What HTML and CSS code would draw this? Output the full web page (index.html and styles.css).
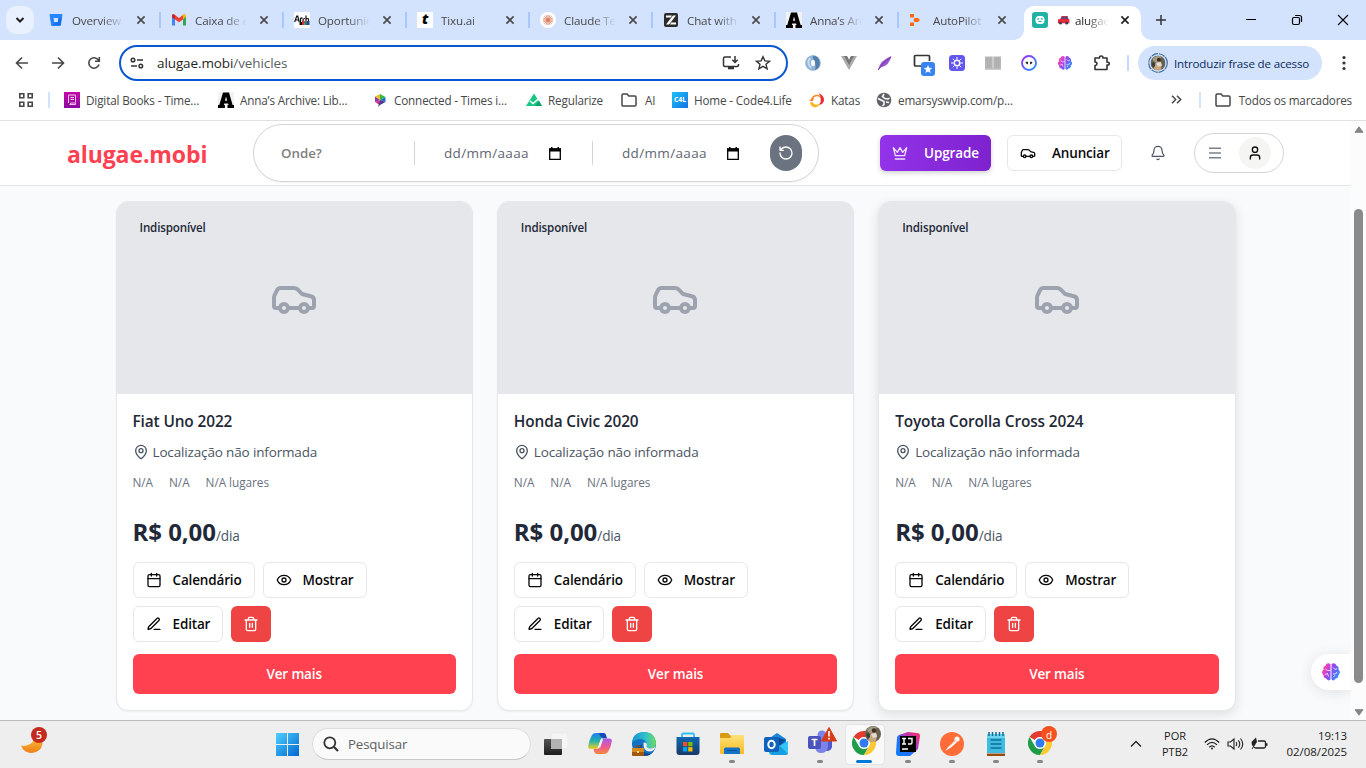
FILE: index.html
```html
<!DOCTYPE html>
<html lang="pt-BR">
<head>
<meta charset="utf-8">
<title>alugae.mobi</title>
<link rel="stylesheet" href="styles.css">
</head>
<body>
<svg class="defs" aria-hidden="true">
  <defs>
    <linearGradient id="gBrain" x1="0" y1="0" x2="1" y2="0.5"><stop offset="0" stop-color="#fb6a4c"/><stop offset=".3" stop-color="#e63fc8"/><stop offset=".6" stop-color="#8a4bf0"/><stop offset="1" stop-color="#3d8bff"/></linearGradient>
    <linearGradient id="gWin" x1="0" y1="0" x2="1" y2="1"><stop offset="0" stop-color="#4fd0ff"/><stop offset="1" stop-color="#0067cf"/></linearGradient>
    <linearGradient id="gMoon" x1="0" y1="0" x2="0" y2="1"><stop offset="0" stop-color="#f8c43c"/><stop offset="1" stop-color="#ef7f1a"/></linearGradient>
    <linearGradient id="gDark" x1="0" y1="0" x2="0" y2="1"><stop offset="0" stop-color="#555"/><stop offset="1" stop-color="#1d1d1d"/></linearGradient>
    <linearGradient id="gCopA" x1="0" y1="0" x2="0" y2="1"><stop offset="0" stop-color="#1a7ff0"/><stop offset=".5" stop-color="#23b3a8"/><stop offset="1" stop-color="#f2d01f"/></linearGradient>
    <linearGradient id="gCopB" x1="0" y1="0" x2="0" y2="1"><stop offset="0" stop-color="#a95bea"/><stop offset=".55" stop-color="#ee5a8f"/><stop offset="1" stop-color="#f98b3c"/></linearGradient>
    <linearGradient id="gEdge" x1="0" y1="0" x2="1" y2="0"><stop offset="0" stop-color="#1595d8"/><stop offset=".6" stop-color="#35c2c4"/><stop offset="1" stop-color="#6fdc5a"/></linearGradient>
    <linearGradient id="gStore" x1="0" y1="0" x2="0" y2="1"><stop offset="0" stop-color="#0f6ab4"/><stop offset="1" stop-color="#173a66"/></linearGradient>
    <linearGradient id="gFold" x1="0" y1="0" x2="0" y2="1"><stop offset="0" stop-color="#ffe07a"/><stop offset="1" stop-color="#f9bd20"/></linearGradient>
    <linearGradient id="gJb" x1="0" y1="1" x2="1" y2="0"><stop offset="0" stop-color="#087cfa"/><stop offset=".45" stop-color="#2e6df5"/><stop offset=".6" stop-color="#b13bc0"/><stop offset="1" stop-color="#fe2d5c"/></linearGradient>
    <linearGradient id="gPurp" x1="0" y1="0" x2="0" y2="1"><stop offset="0" stop-color="#c40aa8"/><stop offset="1" stop-color="#8a0ca0"/></linearGradient>
    <linearGradient id="gRing" x1="0" y1="0" x2="1" y2="1"><stop offset="0" stop-color="#a22bf0"/><stop offset="1" stop-color="#1d9bff"/></linearGradient>
    <symbol id="close" viewBox="0 0 10 10"><path d="M1.400 1.400l7.200 7.200M8.600 1.400l-7.200 7.200" stroke="currentColor" stroke-width="1.600"/></symbol>
    <symbol id="car" viewBox="0 0 24 24"><path d="M19 17h2c.6 0 1-.4 1-1v-3c0-.9-.7-1.700-1.500-1.900C18.700 10.600 16 10 16 10s-1.300-1.400-2.200-2.300c-.5-.4-1.100-.7-1.800-.7H5c-.6 0-1.100.4-1.400.9l-1.400 2.900A3.700 3.700 0 0 0 2 12v4c0 .6.4 1 1 1h2"/><circle cx="7" cy="17" r="2"/><path d="M9 17h6"/><circle cx="17" cy="17" r="2"/></symbol>
    <symbol id="pin" viewBox="0 0 24 24"><path d="M20 10c0 4.990-5.540 10.190-7.400 11.800a1 1 0 0 1-1.200 0C9.540 20.190 4 14.990 4 10a8 8 0 0 1 16 0"/><circle cx="12" cy="10" r="3"/></symbol>
    <symbol id="cal" viewBox="0 0 24 24"><path d="M8 2v4M16 2v4M3 10h18"/><rect x="3" y="4" width="18" height="18" rx="2"/></symbol>
    <symbol id="eye" viewBox="0 0 24 24"><path d="M2.060 12.350a1 1 0 0 1 0-.7 10.750 10.750 0 0 1 19.880 0 1 1 0 0 1 0 .7 10.750 10.750 0 0 1-19.880 0"/><circle cx="12" cy="12" r="3"/></symbol>
    <symbol id="pen" viewBox="0 0 24 24"><path d="M12 20h9M16.380 3.620a1 1 0 0 1 3 3L7.370 18.640a2 2 0 0 1-.86.5l-2.870.84a.5.5 0 0 1-.62-.62l.84-2.870a2 2 0 0 1 .5-.86z"/></symbol>
    <symbol id="trash" viewBox="0 0 24 24"><path d="M3 6h18M19 6v14c0 1-1 2-2 2H7c-1 0-2-1-2-2V6M8 6V4c0-1 1-2 2-2h4c1 0 2 1 2 2v2M10 11v6M14 11v6"/></symbol>
    <symbol id="datepick" viewBox="0 0 12 13"><path d="M.7 2h10.600v10.300H.7z" fill="none" stroke="#000" stroke-width="1.300"/><path d="M0 1.500h12v3H0zM2 0h1.500v2H2zM8.500 0H10v2H8.500z" fill="#000"/></symbol>
    <symbol id="folder" viewBox="0 0 16 14"><path d="M1 2.200c0-.7.4-1.200 1.100-1.200h4l1.700 2h6.100c.7 0 1.100.5 1.100 1.200v7.600c0 .7-.4 1.200-1.100 1.200H2.100C1.400 13 1 12.500 1 11.800z" fill="none" stroke="#474747" stroke-width="1.500"/></symbol>
    <symbol id="annaA" viewBox="0 0 16 16"><path d="M0 0h16v16H0z" fill="#f2f2f2"/><path d="M5 .5h6l3.600 12.500H16V16H9.500v-3h1l-.4-1.600H6.300L5.900 13h1v3H0v-3h1.300zM8 4.500L7 8.700h2.200z" fill="#000"/></symbol>
    <symbol id="brain" viewBox="0 0 20 20"><path d="M9.500 2.200C7.800.4 5 1.400 4.700 3.500 2.600 4 1.800 6 2.700 7.600.6 8.900.6 12 2.600 13c-.4 2.200 1.100 3.500 2.700 3.600.8 2 3.200 2.400 4.200 1zM10.500 2.200c1.700-1.800 4.500-.8 4.800 1.300 2.100.5 2.900 2.500 2 4.100 2.100 1.300 2.100 4.400.1 5.400.4 2.200-1.100 3.500-2.700 3.600-.8 2-3.200 2.400-4.200 1z" fill="url(#gBrain)"/><path d="M4.500 7l2 1.500h3M4 12.500l2.500-1 1 3M12 5.500l2 2 2-1M12 12h2.500l1.500-2M12.500 15l1-1.500" fill="none" stroke="#fff" stroke-width=".8"/></symbol>
    <symbol id="chrome" viewBox="0 0 24 24"><circle cx="12" cy="12" r="12" fill="#fff"/><path d="M1.600 6a12 12 0 0 1 20.800 0H12a6 6 0 0 0-5.200 3z" fill="#e33b2e"/><path d="M1.600 6A12 12 0 0 0 12 24l5.200-9A6 6 0 0 1 6.800 15z" fill="#1e9c4a"/><path d="M22.400 6A12 12 0 0 1 12 24l5.200-9A6 6 0 0 0 12 6z" fill="#fcc934"/><circle cx="12" cy="12" r="5.700" fill="#fff"/><circle cx="12" cy="12" r="4.500" fill="#2f7cf0"/></symbol>
    <symbol id="photo" viewBox="0 0 16 16"><circle cx="8" cy="8" r="8" fill="#69604f"/><path d="M2 3.500A8 8 0 0 1 12 1l-2 4-6 3z" fill="#a39a82"/><path d="M3 14.200l3-7 4-2 2 4-1 6.300a8 8 0 0 1-8-1.300" fill="#c9a67a"/><circle cx="9" cy="4.500" r="2.200" fill="#3c3026"/><path d="M6 8l5-1 1 4-4 1z" fill="#dfdcd6"/><path d="M1 9l3-3 1 5-2 2z" fill="#37403b"/></symbol>
  </defs>
</svg>

<header class="tabstrip">
  <button class="tabsearch"><svg width="10" height="8" viewBox="0 0 10 8"><path d="M1.500 2L5 5.500 8.500 2" fill="none" stroke="#1f1f1f" stroke-width="2"/></svg></button>
  <div class="tabs">
    <div class="tab"><svg width="16" height="16" viewBox="0 0 16 16"><path d="M2 2.500h12L12.300 13.500H3.700z" fill="#2684ff" stroke="#2684ff" stroke-linejoin="round"/><path d="M5.500 6h5L9.800 10H6.200z" fill="#d3e3fd"/><path d="M10.500 6h3l-1 7H4l5.800-3z" fill="#0b5fe0" opacity=".6"/></svg><span class="ttl">Overview</span><svg class="x"><use href="#close"/></svg></div>
    <div class="tab sep"><svg width="16" height="16" viewBox="0 0 16 16"><path d="M1 3.500v10h3V6.500z" fill="#4285f4"/><path d="M15 3.500v10h-3V6.500z" fill="#34a853"/><path d="M1 3.500L3 2.300 8 6l5-3.700 2 1.200-2 3.300L8 10.300 3 6.800z" fill="#ea4335"/><path d="M12 7.200l3-2.400V3c-1-1.200-2-.8-3 0z" fill="#fbbc04"/><path d="M1 3v2l3 2.300V3.200C2.800 2 1.400 2 1 3z" fill="#c5221f"/></svg><span class="ttl">Caixa de e</span><svg class="x"><use href="#close"/></svg></div>
    <div class="tab sep"><svg width="16" height="16" viewBox="0 0 16 16"><rect width="16" height="16" fill="#fff"/><path d="M.7 10l2-6h1l1.500 6M2 8h2.500M6.500 10V6.500q1-1 2 0M11 6.500q-2 0-2 2t2 1.500M12 3.500V10M12 7q2-1 2.500 0v3" fill="none" stroke="#111" stroke-width="1.200"/><path d="M5.500 10h3v3h-3z" fill="#111"/><path d="M8 9h2.500v4H8z" fill="#d9322e"/><path d="M10.500 10H13v3h-2.500z" fill="#16885a"/><path d="M13 9h2.500v4H13z" fill="#2a3f96"/></svg><span class="ttl">Oportunid</span><svg class="x"><use href="#close"/></svg></div>
    <div class="tab sep"><span class="fav-t">t</span><span class="ttl">Tixu.ai</span><svg class="x"><use href="#close"/></svg></div>
    <div class="tab sep"><svg width="16" height="16" viewBox="0 0 16 16"><circle cx="8" cy="8" r="8" fill="#fff"/><path d="M8 2.800v10.400M2.800 8h10.400M4.300 4.300l7.400 7.400M11.700 4.300l-7.400 7.400M6 3.200l4 9.600M10 3.200L6 12.800M3.200 6l9.600 4M3.200 10l9.600-4" stroke="#d97757" stroke-width=".8"/></svg><span class="ttl">Claude Te</span><svg class="x"><use href="#close"/></svg></div>
    <div class="tab sep"><svg width="16" height="16" viewBox="0 0 16 16"><rect x="1" y="1" width="14" height="14" rx="2" fill="#2b2b2b"/><path d="M3 3.500h6l-1.300 2H3zM13 12.500H7l1.300-2H13zM10 3.500h3l-7 9H3z" fill="#fff"/></svg><span class="ttl">Chat with</span><svg class="x"><use href="#close"/></svg></div>
    <div class="tab sep"><svg width="16" height="16"><use href="#annaA"/></svg><span class="ttl">Anna’s Arc</span><svg class="x"><use href="#close"/></svg></div>
    <div class="tab sep"><svg width="16" height="16" viewBox="0 0 16 16"><path d="M1 2h4v3.500H1zM5.500 6H9l2 2-2 2H5.500L4.500 8zM1 10.500h4V14H1z" fill="#ff6a13"/></svg><span class="ttl">AutoPilot</span><svg class="x"><use href="#close"/></svg></div>
    <div class="tab active"><svg width="16" height="16" viewBox="0 0 16 16"><rect width="16" height="16" rx="3" fill="#20b2a4"/><rect x="3.500" y="4" width="9" height="8" rx="3.500" fill="#fff"/><path d="M5.300 6.200h2v1.300h-2zM8.700 6.200h2v1.300h-2zM5.500 9h5q-2.500 2.300-5 0" fill="#20b2a4"/></svg><span class="ttl"><svg width="13" height="10" viewBox="0 0 14 11"><path d="M5 1h6l1.500 3.500H3.500z" fill="#38518c"/><path d="M1 5l3-.8L5.500 1H12v1H6.300L5 4.300h8.500V9H.7z" fill="#e8293c"/><path d="M8.500 2v2.500" stroke="#e8293c"/><circle cx="3.700" cy="9" r="1.500" fill="#333f55"/><circle cx="10.500" cy="9" r="1.500" fill="#333f55"/></svg>alugae</span><svg class="x"><use href="#close"/></svg></div>
  </div>
  <svg class="plus" width="12" height="12" viewBox="0 0 12 12"><path d="M6 1v10M1 6h10" stroke="#333" stroke-width="1.500"/></svg>
  <div class="wincontrols">
    <svg width="12" height="12" viewBox="0 0 12 12"><path d="M1 5.500h10" stroke="#000"/></svg>
    <svg width="12" height="12" viewBox="0 0 12 12"><rect x="1.500" y="3.500" width="7" height="7" rx="1.500" fill="none" stroke="#000" stroke-width="1.200"/><path d="M4 1.500h4.500q2 0 2 2V8" fill="none" stroke="#000" stroke-width="1.200"/></svg>
    <svg width="12" height="12" viewBox="0 0 12 12"><path d="M1 1l10 10M11 1L1 11" stroke="#000" stroke-width="1.100"/></svg>
  </div>
</header>

<div class="toolbar">
  <div class="nav">
    <svg width="14" height="14" viewBox="0 0 14 14"><path d="M13 7H2M7 1.500L1.500 7 7 12.500" /></svg>
    <svg width="14" height="14" viewBox="0 0 14 14"><path d="M1 7h11M7 1.500L12.500 7 7 12.500"/></svg>
    <svg width="14" height="14" viewBox="0 0 14 14"><path d="M12 8.500A5.200 5.200 0 1 1 11.500 4.300M12.300 1v4.200H8"/></svg>
  </div>
  <div class="omnibox">
    <svg width="14" height="12" viewBox="0 0 14 12" fill="none" stroke="#333" stroke-width="1.500"><circle cx="3" cy="3" r="1.800"/><path d="M7 3h6M1 9h6"/><circle cx="10.800" cy="9" r="1.800"/></svg>
    <span class="url">alugae.mobi<em>/vehicles</em></span>
    <svg width="18" height="16" viewBox="0 0 18 16" fill="none" stroke="#333" stroke-width="1.500"><path d="M9 2H3q-1.500 0-1.500 1.500V10q0 1.500 1.500 1.500h12q1.500 0 1.500-1.500V9M13 1v6M10.300 4.800L13 7.500l2.700-2.700"/><path d="M6 12h6v2.300H6z" fill="#333" stroke="none"/></svg>
    <svg class="star" width="16" height="16" viewBox="0 0 16 16" fill="none" stroke="#333" stroke-width="1.400"><path d="M8 1.700l1.900 4.200 4.600.4-3.500 3 1.100 4.500L8 11.400l-4.100 2.400L5 9.300l-3.500-3 4.600-.4z"/></svg>
  </div>
  <div class="exts">
    <svg width="16" height="16" viewBox="0 0 16 16"><circle cx="8" cy="8" r="7.800" fill="#8fb4d6"/><path d="M8 .4A7.600 7.600 0 0 1 10 15Q12 9 8 4z" fill="#527fae"/><path d="M5.500 3Q1 7 6 13" fill="none" stroke="#c5dbef" stroke-width="2"/><ellipse cx="8" cy="8" rx="1.900" ry="3.200" fill="#fff"/></svg>
    <svg width="16" height="16" viewBox="0 0 16 16"><path d="M0 1h6l2 4 2-4h6L8 15z" fill="#aaa"/><path d="M3 1h3l2 4 2-4h3L8 10z" fill="#777"/></svg>
    <svg width="16" height="16" viewBox="0 0 16 16"><path d="M1 15Q3 5 14.500 1 12 11 4.500 12z" fill="#9b59d0"/><path d="M1 15Q6 7 14 2" stroke="#6a35a5" fill="none"/></svg>
    <svg width="22" height="22" viewBox="0 0 22 22"><path d="M8 12H2.500q-1 0-1-1V2.500q0-1 1-1h13q1 0 1 1V7" fill="none" stroke="#333" stroke-width="1.700"/><rect x="8" y="8" width="14" height="14" rx="3" fill="#3984f5"/><path d="M15 11l1.200 2.800 3 .2-2.300 2 .7 3-2.600-1.600L12.400 19l.7-3-2.300-2 3-.2z" fill="#fff"/></svg>
    <svg width="16" height="16" viewBox="0 0 16 16"><rect width="16" height="16" rx="3.500" fill="#6157ee"/><circle cx="8" cy="8" r="2.800" fill="none" stroke="#fff" stroke-width="1.400"/><path d="M8 2v2.500M8 11.500V14M2 8h2.500M11.500 8H14M3.800 3.800l1.700 1.700M10.500 10.500l1.700 1.700M12.200 3.800l-1.700 1.700M5.500 10.500l-1.700 1.700" stroke="#fff"/></svg>
    <svg width="16" height="16" viewBox="0 0 16 16"><path d="M0 1.500h7.700v12H0zM8.300 1.500H16v12H8.300z" fill="#b6b6b6"/><path d="M2.500 3v9M5 3v9M11 3v9M13.500 3v9" stroke="#a6a6a6" stroke-width=".7"/><path d="M0 14h16" stroke="#9b9b9b"/></svg>
    <svg width="16" height="16" viewBox="0 0 16 16"><circle cx="8" cy="8" r="7" fill="#fff" stroke="url(#gRing)" stroke-width="1.900"/><path d="M4.800 7.500l1.700-.5v2zM11.200 7.500L9.500 7v2z" fill="#111" stroke="#111" stroke-width=".8"/></svg>
    <svg width="16" height="16"><use href="#brain"/></svg>
    <svg width="18" height="18" viewBox="0 0 18 18"><path d="M2 4h4.500q-.3-2 1.700-2t1.700 2H14v4.200q2.300-.2 2.300 1.400T14 11v4.500H2v-4q2-.2 2-1.800T2 8z" fill="none" stroke="#333" stroke-width="1.600" stroke-linejoin="round"/></svg>
  </div>
  <i class="tsep"></i>
  <div class="profile"><svg width="20" height="20" viewBox="0 0 20 20"><circle cx="10" cy="10" r="9.300" fill="none" stroke="#3f6ba6" stroke-width="1.200" stroke-dasharray="6.500 .9"/><use href="#photo" x="2.500" y="2.500" width="15" height="15"/></svg><span>Introduzir frase de acesso</span></div>
  <svg class="dots" width="4" height="16" viewBox="0 0 4 16" fill="#333"><circle cx="2" cy="2.500" r="1.600"/><circle cx="2" cy="8" r="1.600"/><circle cx="2" cy="13.500" r="1.600"/></svg>
</div>

<div class="bookmarks">
  <svg class="apps" width="14" height="14" viewBox="0 0 14 14" fill="none" stroke="#474747" stroke-width="1.600"><path d="M.8.800h4v4h-4zM9.200.800h4v4h-4zM.8 9.200h4v4h-4zM9.200 9.200h4v4h-4z"/></svg>
  <i class="bsep"></i>
  <div class="bm b1"><svg width="16" height="16" viewBox="0 0 16 16"><rect width="16" height="16" fill="url(#gPurp)"/><path d="M4.500 3h7v7.500M4.500 3v8M5.500 12.500h6V11h-5v1.500M6.500 5.500H10M6.500 7.500H10" stroke="#ffc4f3" fill="none"/></svg><span>Digital Books - Time...</span></div>
  <div class="bm b2"><svg width="16" height="16"><use href="#annaA"/></svg><span>Anna’s Archive: Lib...</span></div>
  <div class="bm b3"><svg width="16" height="16" viewBox="0 0 16 16"><path d="M8 2L3 4.500 8 8z" fill="#f0c419"/><path d="M8 2l5.500 3L8 8z" fill="#3ab54a"/><path d="M13.500 5v5L8 8z" fill="#1b75bb"/><path d="M3 4.500v5.500L8 8z" fill="#8a3fa6"/><path d="M3 10l4 2.500L8 8z" fill="#d9278a"/><path d="M13.500 10L8 13 6 15l2-7z" fill="#50338f"/></svg><span>Connected - Times i...</span></div>
  <div class="bm b4"><svg width="16" height="16" viewBox="0 0 16 16"><path d="M8 1.500L0 14h16z" fill="#16c784"/><path d="M4 9l3 2.500L13.500 6" fill="none" stroke="#fff" stroke-width="1.600"/><path d="M9 14l4-5 3 5z" fill="#0ba068"/></svg><span>Regularize</span></div>
  <div class="bm b5"><svg width="16" height="14"><use href="#folder"/></svg><span>AI</span></div>
  <div class="bm b6"><b class="c4l">C4L</b><span>Home - Code4.Life</span></div>
  <div class="bm b7"><svg width="16" height="16" viewBox="0 0 16 16" fill="none"><path d="M2.500 8Q4 3 9 3.500q4 1.500 3 6" stroke="#ff8a1f" stroke-width="1.500"/><path d="M9.500 1q6 2.500 5.500 7.500-1 4-5 4.500 4.500-6-.5-12z" fill="#e8283c"/><path d="M10.500 4.500q2 4-.5 7Q7 10 9 7z" fill="#fff"/><path d="M1 10.500Q4 9 5 12q3 2 6-1-1 4-5 4.500-4-.5-5-5z" fill="#ffb51b"/><path d="M0 9l5-4-1 4z" fill="#ff7a2a"/></svg><span>Katas</span></div>
  <div class="bm b8"><svg width="16" height="16" viewBox="0 0 16 16"><circle cx="8" cy="8" r="7.300" fill="#5f6368"/><path d="M2 6.500l4 2 2 1v3l-1.500 1.500M8 2L6.500 4.500 9 6.500l3 .5 1.500-1M10 10l3 .5" stroke="#fff" stroke-width="1.500" fill="none"/></svg><span>emarsyswvip.com/p...</span></div>
  <svg class="more" width="11" height="9" viewBox="0 0 11 9" fill="none" stroke="#474747" stroke-width="1.500"><path d="M1 .8l3.700 3.700L1 8.200M6 .8l3.700 3.700L6 8.200"/></svg>
  <i class="bsep"></i>
  <div class="bm b9"><svg width="16" height="14"><use href="#folder"/></svg><span>Todos os marcadores</span></div>
</div>

<div class="viewport">
  <div class="page">
    <div class="sitehead">
      <div class="logo">alugae.mobi</div>
      <div class="search">
        <span class="where">Onde?</span><i></i>
        <span class="date">dd/mm/aaaa</span><svg class="dp"><use href="#datepick"/></svg><i></i>
        <span class="date">dd/mm/aaaa</span><svg class="dp"><use href="#datepick"/></svg>
        <button class="reset"><svg class="ic" viewBox="0 0 24 24"><path d="M3 12a9 9 0 1 0 9-9 9.750 9.750 0 0 0-6.740 2.740L3 8M3 3v5h5"/></svg></button>
      </div>
      <button class="upgrade"><svg class="ic" viewBox="0 0 24 24"><path d="M2 4l3 12h14l3-12-6 7-4-7-4 7z"/><path d="M5 21h14"/></svg><span>Upgrade</span></button>
      <button class="btn announce"><svg class="ic"><use href="#car"/></svg><span>Anunciar</span></button>
      <svg class="ic bell" viewBox="0 0 24 24"><path d="M10.270 21a2 2 0 0 0 3.460 0M3.260 15.330A1 1 0 0 0 4 17h16a1 1 0 0 0 .74-1.670C19.410 13.960 18 12.500 18 8A6 6 0 0 0 6 8c0 4.500-1.410 5.960-2.740 7.330"/></svg>
      <div class="menu"><svg class="ic bars" viewBox="0 0 24 24"><path d="M3 5h18M3 12h18M3 19h18"/></svg><span class="avatar"><svg class="ic" viewBox="0 0 24 24"><path d="M19 21v-2a4 4 0 0 0-4-4H9a4 4 0 0 0-4 4v2"/><circle cx="12" cy="7" r="4"/></svg></span></div>
    </div>
    <main class="cards">
      <article class="card">
        <div class="photo"><span class="badge">Indisponível</span><svg class="bigcar"><use href="#car"/></svg></div>
        <div class="body">
          <h3>Fiat Uno 2022</h3>
          <p class="loc"><svg class="ic"><use href="#pin"/></svg><span>Localização não informada</span></p>
          <p class="specs"><span>N/A</span><span>N/A</span><span>N/A lugares</span></p>
          <p class="price"><b>R$ 0,00</b><span>/dia</span></p>
          <div class="actions">
            <button class="btn w122"><svg class="ic"><use href="#cal"/></svg><span>Calendário</span></button>
            <button class="btn w104"><svg class="ic"><use href="#eye"/></svg><span>Mostrar</span></button>
            <button class="btn w90"><svg class="ic"><use href="#pen"/></svg><span>Editar</span></button>
            <button class="del"><svg class="ic"><use href="#trash"/></svg></button>
          </div>
          <button class="cta">Ver mais</button>
        </div>
      </article>
      <article class="card">
        <div class="photo"><span class="badge">Indisponível</span><svg class="bigcar"><use href="#car"/></svg></div>
        <div class="body">
          <h3>Honda Civic 2020</h3>
          <p class="loc"><svg class="ic"><use href="#pin"/></svg><span>Localização não informada</span></p>
          <p class="specs"><span>N/A</span><span>N/A</span><span>N/A lugares</span></p>
          <p class="price"><b>R$ 0,00</b><span>/dia</span></p>
          <div class="actions">
            <button class="btn w122"><svg class="ic"><use href="#cal"/></svg><span>Calendário</span></button>
            <button class="btn w104"><svg class="ic"><use href="#eye"/></svg><span>Mostrar</span></button>
            <button class="btn w90"><svg class="ic"><use href="#pen"/></svg><span>Editar</span></button>
            <button class="del"><svg class="ic"><use href="#trash"/></svg></button>
          </div>
          <button class="cta">Ver mais</button>
        </div>
      </article>
      <article class="card raised">
        <div class="photo"><span class="badge">Indisponível</span><svg class="bigcar"><use href="#car"/></svg></div>
        <div class="body">
          <h3>Toyota Corolla Cross 2024</h3>
          <p class="loc"><svg class="ic"><use href="#pin"/></svg><span>Localização não informada</span></p>
          <p class="specs"><span>N/A</span><span>N/A</span><span>N/A lugares</span></p>
          <p class="price"><b>R$ 0,00</b><span>/dia</span></p>
          <div class="actions">
            <button class="btn w122"><svg class="ic"><use href="#cal"/></svg><span>Calendário</span></button>
            <button class="btn w104"><svg class="ic"><use href="#eye"/></svg><span>Mostrar</span></button>
            <button class="btn w90"><svg class="ic"><use href="#pen"/></svg><span>Editar</span></button>
            <button class="del"><svg class="ic"><use href="#trash"/></svg></button>
          </div>
          <button class="cta">Ver mais</button>
        </div>
      </article>
    </main>
    <div class="assistant"><svg width="20" height="20"><use href="#brain"/></svg></div>
  </div>
  <div class="scrollbar">
    <svg width="10" height="7" viewBox="0 0 10 7"><path d="M5 .8L9 6.300H1z" fill="#868686" stroke="#868686" stroke-linejoin="round"/></svg>
    <i></i>
    <svg width="10" height="7" viewBox="0 0 10 7"><path d="M5 6.200L9 .7H1z" fill="#868686" stroke="#868686" stroke-linejoin="round"/></svg>
  </div>
</div>

<footer class="taskbar">
  <div class="weather"><svg width="24" height="20" viewBox="0 0 24 20"><path d="M1 11.500C8 13 14 9 15.500 2q7.500 2 7 8-1.500 8-10.500 9-8.500 0-11-7.500z" fill="url(#gMoon)"/></svg><b>5</b></div>
  <svg class="win" width="23" height="23" viewBox="0 0 23 23"><path d="M0 0h11v11H0zM12 0h11v11H12zM0 12h11v11H0zM12 12h11v11H12z" fill="url(#gWin)"/></svg>
  <div class="wsearch"><svg width="16" height="16" viewBox="0 0 16 16" fill="none" stroke="#333" stroke-width="1.800"><circle cx="6.800" cy="6.800" r="5.500"/><path d="M11 11l4 4" stroke-width="2.200"/></svg><span>Pesquisar</span></div>
  <div class="apps-row">
    <div class="app"><svg width="24" height="24" viewBox="0 0 24 24"><rect x="7" y="1" width="17" height="16" rx="1" fill="#f5f5f5" stroke="#ddd" stroke-width=".5"/><rect x="0" y="7" width="18" height="16" rx="1" fill="url(#gDark)"/><rect x="7" y="7" width="11" height="10" fill="#b2b2b2"/></svg></div>
    <div class="app"><svg width="24" height="24" viewBox="0 0 24 24"><path d="M8 1h7q2 0 2.700 2l.8 3H15q-2 0-2.600 2L10 15.500Q9.300 17 7 17H3q-3.200 0-2.800-3Q1 8 4 3q1.200-2 4-2z" fill="url(#gCopA)"/><path d="M11 1h4.500q2 0 2.500 2l1 3.500h-4L12 4z" fill="#1b49b5"/><path d="M16 22H9q-2 0-2.700-2L5.500 17H9q2 0 2.600-2L14 8q.5-1.500 3-1.500h4q3.200 0 2.800 3Q23 15 20 20q-1.200 2-4 2z" fill="url(#gCopB)"/><path d="M10.300 14.500L13 7.500h2l-2.700 8h-2.500z" fill="#eee"/></svg></div>
    <div class="app"><svg width="24" height="24" viewBox="0 0 24 24"><circle cx="12" cy="12" r="12" fill="#1073c4"/><path d="M0 11Q1 0 12 0t12 11q0 6-7 5.500-3-.5-2-3Q15 8 9 7 3 7 0 11z" fill="url(#gEdge)"/><path d="M10 12q-2 8 6 9.500 4 0 6-2.500-3.500 5-10 5Q4 23 6 15z" fill="#0c4a91"/><path d="M11.500 10.500q4-.5 3.300 3Q14 16 18 16.500q4 0 5.500-2-1 5-6.500 5-6-.5-5.500-9z" fill="#eee"/><rect x="0" y="16" width="12" height="8" rx="1" fill="#a3560c"/><path d="M0 16h12v4H0z" fill="#d58a21"/><path d="M5 19h2v2H5z" fill="#fcdb6d"/><path d="M4 16v-2h4v2" fill="none" stroke="#8b4a0a"/></svg></div>
    <div class="app"><svg width="24" height="24" viewBox="0 0 24 24"><path d="M6 6V2.500Q6 1.500 7 1.500h10q1 0 1 1V6" fill="none" stroke="#2fc1f5" stroke-width="1.800"/><path d="M.5 5h23v15q0 3-3 3h-17q-3 0-3-3z" fill="url(#gStore)"/><path d="M7 10h4.300v4.300H7z" fill="#f25022"/><path d="M12.200 10h4.300v4.300h-4.300z" fill="#7fba00"/><path d="M7 15.200h4.300v4.300H7z" fill="#00a4ef"/><path d="M12.200 15.200h4.300v4.300h-4.300z" fill="#ffb900"/></svg></div>
    <div class="app run"><svg width="24" height="24" viewBox="0 0 24 24"><path d="M0 2q0-1 1-1h7l3 3h12q1 0 1 1v5H0z" fill="#d89b12"/><path d="M0 6h10l2-3h11q1 0 1 1v18H1q-1 0-1-1z" fill="url(#gFold)"/><path d="M4 22v-5q0-1.500 1.500-1.500h13q1.500 0 1.500 1.500v5z" fill="#1572c4"/><path d="M7 18.500h10" stroke="#0c549c"/></svg></div>
    <div class="app"><svg width="24" height="24" viewBox="0 0 24 24"><path d="M3 8L13 1l9 6v10H3z" fill="#1687d9"/><path d="M12 5l10 3-10 9z" fill="#0b4c97"/><path d="M24 9v11q0 3-3 3H8q-3 0-3-3z" fill="#34c5f2"/><path d="M5 20l10-7 9 9q-1 1-3 1H8z" fill="#179ee0"/><rect y="5" width="15" height="15" rx="2" fill="#0f63bd"/><ellipse cx="7.500" cy="12.500" rx="3.200" ry="3.700" fill="none" stroke="#fff" stroke-width="2"/></svg></div>
    <div class="app run"><svg width="30" height="28" viewBox="0 0 30 28"><circle cx="14" cy="8" r="4.500" fill="#7b83eb"/><path d="M16 11h8v9q-1 4-5 4h-3z" fill="#5059c9"/><path d="M8 11h12v9q-1 6-7 6-5 0-6-6z" fill="#7b83eb"/><rect x="0" y="9" width="13" height="13" rx="2" fill="#4b53bc"/><path d="M3.500 12.500h6M6.500 12.500v6.500" stroke="#fff" stroke-width="1.700"/><path d="M21 .5L28.500 14h-15z" fill="#d83b16" stroke="#d83b16" stroke-linejoin="round"/><path d="M21 4v5.500M21 10.800v1.700" stroke="#fff" stroke-width="1.600"/></svg></div>
    <div class="app current"><svg width="30" height="30" viewBox="0 0 30 30"><use href="#chrome" x="0" y="5" width="24" height="24"/><use href="#photo" x="13" y="0" width="16" height="16"/></svg></div>
    <div class="app run"><svg width="24" height="24" viewBox="0 0 24 24"><path d="M1 6q0-2 2-3l9-3 9 1q3 0 3 3l-2 13-8 7H3q-3 0-3-3z" fill="url(#gJb)"/><rect x="4" y="4" width="16" height="16" fill="#000"/><path d="M6 6.500h4M6 12h4M8 6.500V12M12 6.500h4v4q0 1.500-1.500 1.500H12M6 17h6" stroke="#fff" stroke-width="1.400" fill="none"/></svg></div>
    <div class="app run"><svg width="24" height="24" viewBox="0 0 24 24"><circle cx="12" cy="12" r="12" fill="#ff6c37"/><path d="M5 19l4-5 6-6 2 2-6 5.500z" fill="#fff"/><circle cx="17" cy="7" r="2.600" fill="#fff"/><path d="M9 14.500l7-7" stroke="#ff6c37" stroke-width=".7"/></svg></div>
    <div class="app run"><svg width="24" height="24" viewBox="0 0 24 24"><path d="M3 2h18v19H3z" fill="#3fbde0"/><path d="M3 2h18v4H3z" fill="#6bd4ee"/><path d="M3 21.500h18V24H3z" fill="#9a4b12"/><path d="M5 0v4M8.500 0v4M12 0v4M15.500 0v4M19 0v4" stroke="#126a96" stroke-width="1.500"/><path d="M6.500 8h11M6.500 12h11M6.500 16h11" stroke="#0f6c9a" stroke-width="1.700"/></svg></div>
    <div class="app run"><svg width="30" height="30" viewBox="0 0 30 30"><use href="#chrome" x="0" y="5" width="24" height="24"/><circle cx="21" cy="8" r="8" fill="#f4511e"/></svg><b class="d">d</b></div>
  </div>
  <svg class="chev" width="12" height="8" viewBox="0 0 12 8"><path d="M1 6.500L6 1.500l5 5" fill="none" stroke="#222" stroke-width="1.300"/></svg>
  <div class="lang">POR<br>PTB2</div>
  <div class="tray">
    <svg width="16" height="12" viewBox="0 0 16 12" fill="none" stroke="#222" stroke-width="1.200"><path d="M.8 4.500Q8-2.800 15.200 4.500M3 6.900q5-5 10 0M5.200 9.200q2.800-2.700 5.600 0"/><circle cx="8" cy="10.500" r="1" fill="#222" stroke="none"/></svg>
    <svg width="17" height="14" viewBox="0 0 17 14" fill="none" stroke="#222" stroke-width="1.100"><path d="M1 5v4h2.500L7 12V2L3.500 5zM9 5q1.500 2 0 4M11.300 3.300q3 3.700 0 7.400M13.500 1.500q4.500 5.500 0 11"/></svg>
    <svg width="17" height="14" viewBox="0 0 17 14"><path d="M7 4h6q1.500 0 1.500 1.500v4Q14.500 11 13 11H5Q3.500 11 3 10" fill="none" stroke="#222" stroke-width="1.300"/><path d="M15 6.300h1.500v2.500H15z" fill="#222"/><path d="M.5 5L5 .5l1 4.500-3 4-2-.5z" fill="#222"/><path d="M1 12l3-5" stroke="#222"/></svg>
  </div>
  <div class="clock">19:13<br>02/08/2025</div>
</footer>
</body>
</html>
```
FILE: styles.css
```css
* { box-sizing: border-box; }
body {
  margin: 0; width: 1366px; height: 768px; overflow: hidden;
  display: flex; flex-direction: column;
  font-family: "Open Sans", "Noto Sans", sans-serif;
  background: #fff;
}
svg { display: block; flex: none; }
button { font: inherit; border: 0; margin: 0; padding: 0; display: flex; align-items: center; justify-content: center; flex: none; }
p, h3 { margin: 0; }
span { white-space: nowrap; }
.defs { position: absolute; width: 0; height: 0; }

/* browser tabs */
.tabstrip { height: 40px; flex: none; display: flex; align-items: center; background: #d3e3fd; padding-left: 6px; font-size: 11.600px; letter-spacing: -.15px; color: #474747; }
.tabsearch { width: 28px; height: 28px; border-radius: 10px; background: #e9f0fe; margin-right: 3px; }
.tabs { display: flex; height: 40px; }
.tab { width: 123px; height: 40px; display: flex; align-items: center; padding-left: 11px; position: relative; }
.tab.sep::before { content: ""; width: 2px; height: 16px; background: #a8c7fa; position: absolute; left: -1px; top: 12px; }
.ttl { width: 54px; margin-left: 8px; -webkit-mask-image: linear-gradient(90deg, #000 55%, transparent 96%); mask-image: linear-gradient(90deg, #000 55%, transparent 96%); }
.x { width: 10px; height: 10px; margin-left: 10px; color: #474747; }
.fav-t { width: 16px; height: 16px; background: #fff; color: #000; font-size: 14px; font-weight: 800; font-style: italic; line-height: 14px; text-align: center; flex: none; }
.tab.active { z-index: 1; color: #1f1f1f; }
.tab.active > * { position: relative; }
.tab.active .x { color: #1f1f1f; margin-left: 9px; }
.tab.active::before { content: ""; position: absolute; left: 3px; top: 6px; width: 117px; height: 34px; background: #fff; border-radius: 10px 10px 0 0; }
.tab.active::after { content: ""; position: absolute; left: -7px; bottom: 0; width: 137px; height: 10px; background: radial-gradient(circle at 0 0, transparent 9.500px, #fff 10px) left / 10px 10px no-repeat, radial-gradient(circle at 100% 0, transparent 9.500px, #fff 10px) right / 10px 10px no-repeat; }
.tab.active .ttl { display: flex; align-items: center; gap: 5px; margin-left: 9px; }
.plus { margin-left: 11px; }
.wincontrols { display: flex; gap: 34px; margin-left: auto; padding-right: 17px; }

/* address bar */
.toolbar { height: 43px; flex: none; display: flex; align-items: center; padding: 3px 20px 0 15px; background: #fff; }
.nav { display: flex; gap: 22px; fill: none; stroke: #474747; stroke-width: 1.600; margin-right: 18px; }
.omnibox { width: 669px; height: 36px; border: 2px solid #0b57d0; border-radius: 18px; display: flex; align-items: center; padding: 0 15px 0 9px; }
.url { font-size: 13.500px; letter-spacing: -.1px; color: #1f1f1f; flex: 1; margin-left: 13px; }
.url em { font-style: normal; color: #5b5f63; }
.star { margin-left: 15px; }
.exts { display: flex; align-items: center; gap: 20px; margin-left: 17px; width: 306px; }
.exts svg:nth-child(4) { margin: 4px -5px 0 0; }
.exts svg:nth-child(5) { margin-left: -1px; }
.tsep { width: 2px; height: 16px; background: #c7dafb; margin: 0 9px 0 16px; flex: none; }
.profile { width: 184px; height: 34px; border-radius: 17px; background: #d3e3fd; display: flex; align-items: center; gap: 6px; padding-left: 10px; font-size: 11.600px; letter-spacing: -.18px; color: #0b2a5c; flex: none; }
.dots { margin-left: 20px; }

/* bookmarks bar */
.bookmarks { height: 38px; flex: none; display: flex; align-items: center; padding: 0 14px 4px 19px; font-size: 11.700px; letter-spacing: -.15px; color: #474747; border-bottom: 1px solid #e0e0e0; }
.bsep { width: 2px; height: 16px; background: #d3e3fd; margin: 0 14px 0 15px; }
.bm { display: flex; align-items: center; gap: 6px; }
.b1 { width: 154px; } .b2 { width: 154px; } .b3 { width: 154px; } .b4 { width: 95px; } .b5 { width: 51px; gap: 8px; } .b6 { width: 137px; } .b7 { width: 67px; } .b8 { width: 295px; }
.b9 { gap: 8px; white-space: nowrap; letter-spacing: -.2px; margin-left: auto; }
.more + .bsep { margin: 0 0 0 17px; }
.c4l { width: 16px; height: 16px; background: linear-gradient(135deg, #1cc3f5, #1272e8); color: #fff; font-size: 7px; line-height: 15px; text-align: center; letter-spacing: -.2px; }

/* site */
.viewport { flex: 1; display: flex; min-height: 0; }
.page { width: 1351px; background: #f9fafb; position: relative; overflow: hidden; }
.ic { width: 16px; height: 16px; fill: none; stroke: currentColor; stroke-width: 2; stroke-linecap: round; stroke-linejoin: round; }
.sitehead { height: 65px; background: #fff; border-bottom: 1px solid #e5e7eb; display: flex; align-items: center; padding-left: 67px; }
.logo { width: 186px; font-size: 23px; letter-spacing: -.1px; font-weight: 700; color: #ff4050; padding-top: 1px; }
.search { width: 566px; height: 58px; border: 1px solid #d1d5db; border-radius: 29px; box-shadow: 0 1px 2px rgba(0,0,0,.06); display: flex; align-items: center; padding-left: 27px; }
.search i { width: 1px; height: 24px; background: #d1d5db; margin-right: 29px; }
.where { width: 133px; font-size: 13.300px; font-weight: 600; color: #808080; }
.date { width: 105px; font-size: 13.500px; color: #5f6673; letter-spacing: .35px; }
.dp { width: 12px; height: 13px; margin-right: 31px; }
.reset { width: 32px; height: 36px; border-radius: 16px; background: #6b7280; color: #fff; }
.upgrade { width: 111px; height: 36px; margin-left: 61px; border-radius: 6px; background: linear-gradient(90deg, #9333ea, #7e22ce); color: #fff; font-size: 13.500px; letter-spacing: -.1px; font-weight: 600; gap: 16px; box-shadow: 0 2px 5px rgba(0,0,0,.18); }
.upgrade .ic { opacity: .85; }
.btn { height: 36px; border: 1px solid #e5e7eb; border-radius: 6px; background: #fff; color: #0a0a0a; font-size: 13.500px; letter-spacing: -.15px; font-weight: 600; gap: 11px; justify-content: flex-start; padding-left: 12px; }
.announce { width: 115px; margin-left: 16px; gap: 16px; }
.bell { color: #4b5563; margin-left: 28px; stroke-width: 1.800; }
.menu { margin-left: 28px; width: 90px; height: 40px; border: 1px solid #d1d5db; border-radius: 20px; display: flex; align-items: center; padding-left: 12px; gap: 16px; color: #7b818d; }
.bars { stroke-width: 2.300; stroke-linecap: butt; }
.avatar { width: 32px; height: 32px; border-radius: 50%; background: #f5f5f4; display: flex; align-items: center; justify-content: center; color: #111; }

.cards { width: 1120px; margin: 15px auto 0; display: grid; grid-template-columns: repeat(3, 1fr); gap: 24px; }
.card { height: 510px; border: 1px solid #e5e7eb; border-radius: 12px; background: #fff; overflow: hidden; box-shadow: 0 1px 2px rgba(0,0,0,.05); }
.card.raised { box-shadow: 0 4px 12px rgba(0,0,0,.11); }
.photo { height: 192px; background: #e5e7eb; display: flex; align-items: center; justify-content: center; position: relative; }
.badge { position: absolute; left: 23px; top: 17px; font-size: 11.600px; letter-spacing: -.15px; line-height: 17px; font-weight: 600; color: #1f2937; }
.bigcar { width: 48px; height: 48px; fill: none; stroke: #9ca3af; stroke-width: 2; stroke-linecap: round; stroke-linejoin: round; }
.body { padding: 16px; display: flex; flex-direction: column; }
h3 { font-size: 15.400px; letter-spacing: -.12px; line-height: 24px; font-weight: 600; color: #1f2937; }
.loc { display: flex; align-items: center; gap: 4px; height: 20px; margin-top: 8px; font-size: 13.500px; letter-spacing: -.15px; color: #4b5563; }
.specs { display: flex; gap: 16px; height: 16px; align-items: center; margin-top: 12px; font-size: 11.800px; letter-spacing: -.05px; color: #6b7280; }
.price { display: flex; align-items: baseline; height: 32px; margin-top: 26px; line-height: 32px; color: #1f2937; }
.price b { font-size: 24px; letter-spacing: -.05px; font-weight: 700; }
.price span { font-size: 13.600px; letter-spacing: -.15px; color: #4b5563; }
.actions { display: flex; flex-wrap: wrap; gap: 8px; width: 240px; margin-top: 14px; }
.w122 { width: 122px; } .w104 { width: 104px; } .w90 { width: 90.500px; }
.del { width: 40px; height: 36px; border-radius: 6px; background: #ef4444; color: #fff; }
.cta { height: 40px; margin-top: 12px; border-radius: 6px; background: #ff4150; color: #fff; font-size: 13.500px; letter-spacing: -.15px; font-weight: 600; }
.assistant { position: absolute; right: 0; top: 533px; width: 40px; height: 36px; border-radius: 18px 0 0 18px; background: #fff; display: flex; align-items: center; padding-left: 10px; box-shadow: 0 2px 14px rgba(0,0,0,.1); }
.scrollbar { width: 15px; background: #fcfcfc; display: flex; flex-direction: column; align-items: center; padding: 5px 0 4px; }
.scrollbar i { width: 9px; height: 474px; border-radius: 5px; background: #8a8a8a; margin: 76px 0 auto; }

/* taskbar */
.taskbar { height: 48px; flex: none; background: #eee; border-top: 1px solid #b9bbbd; display: flex; align-items: center; color: #1b1b1b; padding-bottom: 1px; }
.weather { width: 276px; height: 46px; padding: 13px 0 0 20px; position: relative; }
.weather b { position: absolute; left: 31px; top: 6px; width: 16px; height: 16px; border-radius: 8px; background: #c42b1c; color: #fff; font-size: 10.500px; font-weight: 600; line-height: 16px; text-align: center; }
.wsearch { width: 219px; height: 32px; margin-left: 13px; border: 1px solid #dedede; border-bottom-color: #c8c8c8; border-radius: 16px; background: #fafafa; display: flex; align-items: center; padding-left: 10px; gap: 9px; font-size: 13.300px; letter-spacing: -.15px; color: #616161; }
.apps-row { display: flex; margin-left: 3px; }
.app { width: 44px; height: 46px; display: flex; align-items: center; padding-left: 10px; position: relative; }
.app.run::after { content: ""; position: absolute; left: 19px; bottom: 4px; width: 6px; height: 3px; border-radius: 2px; background: #868686; }
.app.current::before { content: ""; position: absolute; left: 3px; top: 3px; width: 38px; height: 39px; border-radius: 4px; background: #f9f9f9; border: 1px solid #e3e3e3; }
.app.current::after { content: ""; position: absolute; left: 14px; bottom: 4px; width: 16px; height: 3px; border-radius: 2px; background: #0078d4; }
.app svg { position: relative; }
.app svg[width="30"][height="30"] { top: -3px; }
.app svg[height="28"] { top: -3px; }
.d { position: absolute; left: 23px; top: 6px; width: 16px; text-align: center; font-size: 10px; line-height: 16px; font-weight: 400; color: #fff; }
.chev { margin-left: 68px; }
.lang { font-size: 11px; line-height: 16px; text-align: center; width: 44px; margin-left: 11px; }
.tray { display: flex; align-items: center; gap: 7px; margin-left: 7px; }
.clock { font-size: 11.500px; letter-spacing: -.05px; line-height: 16px; text-align: right; margin-left: auto; padding-right: 19px; }
```
